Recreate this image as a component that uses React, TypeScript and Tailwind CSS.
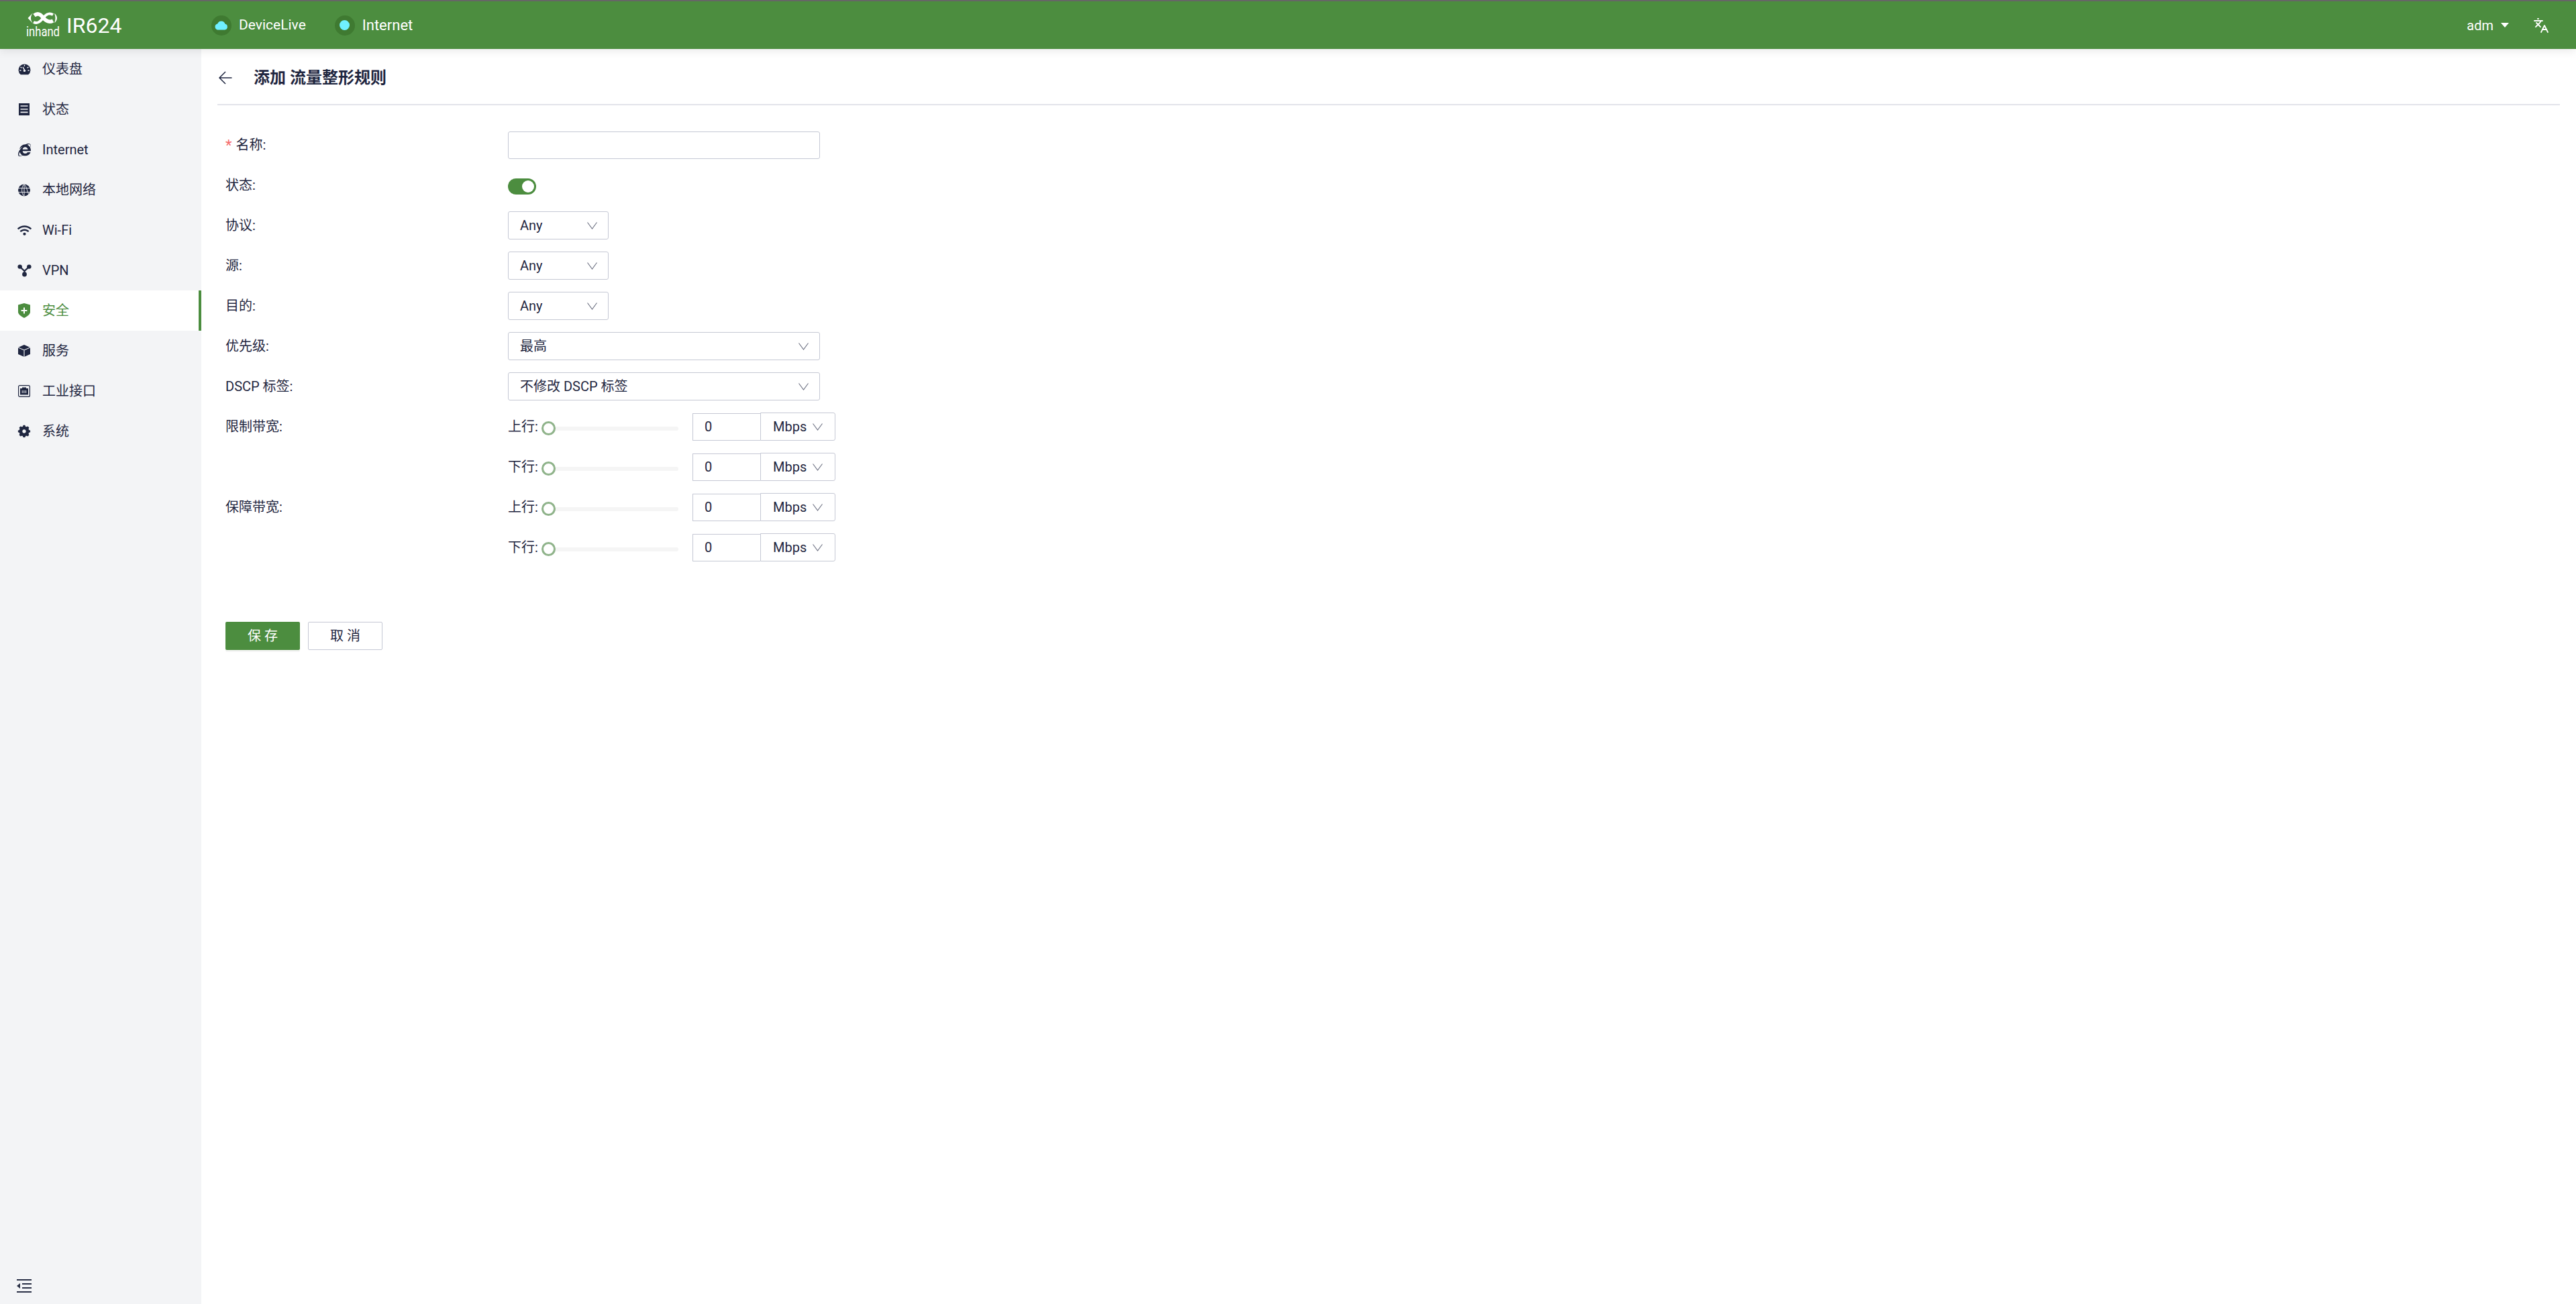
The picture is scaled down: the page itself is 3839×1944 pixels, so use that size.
import { ReactNode } from 'react';
import { FaInternetExplorer, FaWifi } from 'react-icons/fa';
import { RiSettings5Fill } from 'react-icons/ri';
import { Languages } from 'lucide-react';

const GaugeIcon = () => (
  <svg viewBox="0 0 20 20" className="w-[19px] h-[19px]">
    <path fill="#1f2640" d="M4 18.2A9.4 9.4 0 1 1 16 18.2Z" />
    <path stroke="#f3f4f6" strokeWidth="1.5" strokeLinecap="round" d="M10 11 7.6 6.6M10 3.4v1.2M4.2 6.6l1 .7M15.8 6.6l-1 .7M3 11.6h1.2M15.8 11.6H17" />
    <circle cx="10" cy="12" r="1.8" fill="#f3f4f6" />
  </svg>
);
const DocIcon = () => (
  <svg viewBox="0 0 16 18" className="w-[16px] h-[18px]">
    <path fill="#1f2640" d="M0 0h16v18H0z" />
    <path fill="#f3f4f6" d="M2.5 3.2h11v1.6h-11zM2.5 8h11v1.6h-11zM2.5 12.6h11v1.6h-11z" />
  </svg>
);
const GlobeIcon = () => (
  <svg viewBox="0 0 20 20" className="w-[18px] h-[19px]">
    <circle cx="10" cy="10" r="10" fill="#1f2640" />
    <path stroke="#f3f4f6" strokeWidth="1" fill="none" d="M0 6.6h20M0 13.4h20M10 0v20M10 0C5 4 5 16 10 20M10 0c5 4 5 16 10 20" />
  </svg>
);
const VpnIcon = () => (
  <svg viewBox="0 0 22 20" className="w-[21px] h-[19px]">
    <path stroke="#1f2640" strokeWidth="2.4" fill="none" d="M4 4 11 10.5 18 4M11 10.5V16" />
    <circle cx="3.8" cy="3.8" r="3.4" fill="#1f2640" />
    <circle cx="18.2" cy="3.8" r="3.4" fill="#1f2640" />
    <circle cx="11" cy="15.8" r="3.6" fill="#1f2640" />
  </svg>
);
const ShieldIcon = () => (
  <svg viewBox="0 0 18 22" className="w-[18px] h-[22px]">
    <path fill="#4c8d3f" d="M9 0 18 2.6V13C18 17 13 20 9 22 5 20 0 17 0 13V2.6Z" />
    <path fill="#fff" d="M8 6.5h2V10h3.4v2H10v3.5H8V12H4.6v-2H8Z" />
  </svg>
);
const CubeIcon = () => (
  <svg viewBox="0 0 18 18" className="w-[18px] h-[18px]">
    <path fill="#1f2640" d="M9 0 18 4V14L9 18 0 14V4Z" />
    <path stroke="#f3f4f6" strokeWidth="1.1" fill="none" d="M0 4 9 8 18 4M9 8V18" />
  </svg>
);
const PortIcon = () => (
  <svg viewBox="0 0 18 18" className="w-[18px] h-[18px]">
    <rect x="0.6" y="0.6" width="16.8" height="16.8" rx="2" fill="none" stroke="#1f2640" strokeWidth="1.2" />
    <path fill="#1f2640" d="M3 5h3V3.4h6V5h3v9.6H3Z" />
    <path stroke="#f3f4f6" strokeWidth="0.8" d="M6.2 8v4M8 8v4M10 8v4M11.8 8v4" />
  </svg>
);
const Chevron = () => (
  <svg viewBox="0 0 15 11" className="w-[15px] h-[11px] shrink-0">
    <path d="M0.5 0.5 7.5 10 14.5 0.5" fill="none" stroke="#6b6f80" strokeWidth="1.1" />
  </svg>
);

const menu: { label: string; icon: ReactNode; active?: boolean }[] = [
  { label: '仪表盘', icon: <GaugeIcon /> },
  { label: '状态', icon: <DocIcon /> },
  { label: 'Internet', icon: <FaInternetExplorer className="w-[19px] h-[19px] text-[#1f2640]" /> },
  { label: '本地网络', icon: <GlobeIcon /> },
  { label: 'Wi-Fi', icon: <FaWifi className="w-[21px] h-[21px] text-[#1f2640]" /> },
  { label: 'VPN', icon: <VpnIcon /> },
  { label: '安全', icon: <ShieldIcon />, active: true },
  { label: '服务', icon: <CubeIcon /> },
  { label: '工业接口', icon: <PortIcon /> },
  { label: '系统', icon: <RiSettings5Fill className="w-[22px] h-[22px] text-[#1f2640]" /> },
];

function Logo() {
  return (
    <div className="flex items-center text-white">
      <svg viewBox="0 0 52 44" className="w-[52px] h-[44px] overflow-visible">
        <path fill="none" stroke="#fff" strokeWidth="5.5" d="M13 7C18 3 22 5 26 10S35 18 41 15" />
        <path fill="none" stroke="#fff" strokeWidth="4" d="M12 17C18 20 22 16 27 10S36 3 41 6" />
        <path fill="#fff" d="M11 3 3.5 11l7.5 8C7 14 7 8 11 3ZM43 4c2 1 4 4 4 7s-2 6-4 7c2-4 2-10 0-14Z" />
        <text x="26" y="38" textAnchor="middle" fontSize="20" fill="#fff" fontFamily="'Roboto', sans-serif" textLength="50" lengthAdjust="spacingAndGlyphs">inhand</text>
      </svg>
      <span className="ml-[9px] text-[32px] leading-none">IR624</span>
    </div>
  );
}

function Dot({ cloud }: { cloud?: boolean }) {
  return (
    <span className="w-[30px] h-[30px] rounded-full bg-[#3f7a31] flex items-center justify-center">
      {cloud ? (
        <svg viewBox="0 0 20 14" className="w-[20px] h-[15px]">
          <path fill="#6ff0ff" d="M5 14a4.6 4.6 0 0 1-.8-9.1A6 6 0 0 1 15.4 5 4.6 4.6 0 0 1 15 14Z" />
        </svg>
      ) : (
        <span className="w-[15px] h-[15px] rounded-full bg-[#6ff0ff]" />
      )}
    </span>
  );
}

function Sel({ value, w }: { value: string; w: string }) {
  return (
    <div className={`${w} h-[42px] pl-[17px] pr-[16px] border border-[#c5c8d4] rounded-[3px] bg-white flex items-center justify-between`}>
      <span>{value}</span>
      <Chevron />
    </div>
  );
}

function Row({ label, required, children }: { label?: string; required?: boolean; children: ReactNode }) {
  return (
    <div className="flex h-[60px]">
      <div className="w-[421px] h-[42px] flex items-center shrink-0">
        {required && <span className="text-[#f56c6c] mr-[6px] text-[22px]">*</span>}
        {label && <span>{label}:</span>}
      </div>
      <div className="h-[42px] flex items-center">{children}</div>
    </div>
  );
}

function Band({ label, dir }: { label?: string; dir: string }) {
  return (
    <Row label={label}>
      <span className="w-[50px]">{dir}:</span>
      <div className="relative w-[204px] h-[6px] bg-[#f5f5f5] rounded-full mt-[6px]">
        <span className="absolute left-0 -top-[8px] w-[21px] h-[21px] rounded-full border-[3px] border-[#8fb38a] bg-white" />
      </div>
      <div className="ml-[21px] w-[101px] h-[41px] pl-[17px] border border-r-0 border-[#c5c8d4] flex items-center">0</div>
      <div className="w-[112px] h-[42px] pl-[18px] pr-[18px] border border-[#c5c8d4] rounded-r-[3px] flex items-center justify-between">
        <span>Mbps</span>
        <Chevron />
      </div>
    </Row>
  );
}

export default function App() {
  return (
    <div className="h-screen flex flex-col bg-white text-[20px] text-[#1f2640] overflow-hidden font-['Roboto','Noto_Sans_CJK_SC',sans-serif]">
      <header className="h-[73px] shrink-0 border-t-2 border-[#666] bg-[#4c8d3f] flex items-center text-white relative z-10 shadow-[0_4px_12px_rgba(0,0,0,0.08)]">
        <div className="w-[315px] pl-[38px] shrink-0">
          <Logo />
        </div>
        <div className="flex items-center gap-[11px]">
          <Dot cloud />
          <span className="text-[21px]">DeviceLive</span>
        </div>
        <div className="flex items-center gap-[11px] ml-[43px]">
          <Dot />
          <span className="text-[22px]">Internet</span>
        </div>
        <div className="ml-auto flex items-center pr-[40px]">
          <span>adm</span>
          <span className="ml-[11px] w-0 h-0 border-x-[6px] border-x-transparent border-t-[7px] border-t-white" />
          <Languages className="ml-[36px] w-[24px] h-[24px]" strokeWidth={1.8} />
        </div>
      </header>
      <div className="flex-1 flex min-h-0">
        <aside className="w-[300px] shrink-0 bg-[#f3f4f6] flex flex-col">
          {menu.map((m) => (
            <div key={m.label} className={`h-[60px] flex items-center ${m.active ? 'bg-white text-[#4c8d3f] border-r-4 border-[#4c8d3f]' : ''}`}>
              <span className="w-[24px] ml-[24px] mr-[15px] flex justify-center">{m.icon}</span>
              <span>{m.label}</span>
            </div>
          ))}
          <div className="mt-auto h-[60px] pl-[25px] pb-[17px] flex items-end">
            <svg viewBox="0 0 22 20" className="w-[22px] h-[20px]">
              <path fill="#2b3147" d="M0 0h22v2H0zM8 6h14v2H8zM8 12h14v2H8zM0 18h22v2H0zM0 10l5-4v8Z" />
            </svg>
          </div>
        </aside>
        <main className="flex-1 pl-[24px] pr-[24px]">
          <div className="h-[84px] border-b-2 border-[#e2e3ea] flex items-center pt-[3px]">
            <svg viewBox="0 0 20 20" className="ml-[2px] w-[20px] h-[20px]">
              <path d="M19.5 10H1M10 1 1 10l9 9" fill="none" stroke="#1f2640" strokeWidth="1.5" />
            </svg>
            <h1 className="ml-[32px] text-[24px] font-semibold">添加 流量整形规则</h1>
          </div>
          <form className="pl-[12px] pt-[38px]">
            <Row label="名称" required>
              <div className="w-[465px] h-[41px] border border-[#c5c8d4] rounded-[3px]" />
            </Row>
            <Row label="状态">
              <div className="w-[42px] h-[24px] mt-[4px] rounded-full bg-[#4c8d3f] flex items-center justify-end pr-[3px]">
                <span className="w-[18px] h-[18px] rounded-full bg-white" />
              </div>
            </Row>
            <Row label="协议"><Sel value="Any" w="w-[150px]" /></Row>
            <Row label="源"><Sel value="Any" w="w-[150px]" /></Row>
            <Row label="目的"><Sel value="Any" w="w-[150px]" /></Row>
            <Row label="优先级"><Sel value="最高" w="w-[465px]" /></Row>
            <Row label="DSCP 标签"><Sel value="不修改 DSCP 标签" w="w-[465px]" /></Row>
            <Band label="限制带宽" dir="上行" />
            <Band dir="下行" />
            <Band label="保障带宽" dir="上行" />
            <Band dir="下行" />
            <div className="flex gap-[12px] mt-[72px]">
              <button type="button" className="w-[111px] h-[42px] pl-[5px] rounded-[2px] bg-[#4c8d3f] text-white tracking-[5px] shadow-[0_3px_0_rgba(0,0,0,0.04)]">保存</button>
              <button type="button" className="w-[111px] h-[42px] pl-[5px] rounded-[2px] border border-[#c5c8d4] tracking-[5px]">取消</button>
            </div>
          </form>
        </main>
      </div>
    </div>
  );
}
